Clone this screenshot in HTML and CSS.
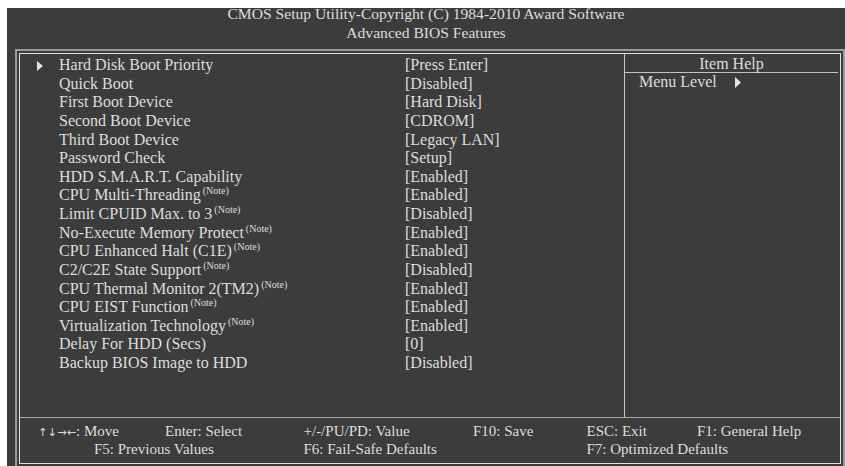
FILE: index.html
```html
<!DOCTYPE html>
<html>
<head>
<meta charset="utf-8">
<link rel="stylesheet" href="styles.css">
</head>
<body>
<div class="screen">
  <header class="title">
    <div>CMOS Setup Utility-Copyright (C) 1984-2010 Award Software</div>
    <div>Advanced BIOS Features</div>
  </header>
  <div class="outer">
    <div class="inner">
      <div class="main">
        <div class="list">
          <div class="row"><span class="mark"><svg width="6" height="10" viewBox="0 0 6 10"><polygon points="0,0 6,5 0,10" fill="#e4e4e4"/></svg></span><span class="label">Hard Disk Boot Priority</span><span class="value">[Press Enter]</span></div>
          <div class="row"><span class="mark"></span><span class="label">Quick Boot</span><span class="value">[Disabled]</span></div>
          <div class="row"><span class="mark"></span><span class="label">First Boot Device</span><span class="value">[Hard Disk]</span></div>
          <div class="row"><span class="mark"></span><span class="label">Second Boot Device</span><span class="value">[CDROM]</span></div>
          <div class="row"><span class="mark"></span><span class="label">Third Boot Device</span><span class="value">[Legacy LAN]</span></div>
          <div class="row"><span class="mark"></span><span class="label">Password Check</span><span class="value">[Setup]</span></div>
          <div class="row"><span class="mark"></span><span class="label">HDD S.M.A.R.T. Capability</span><span class="value">[Enabled]</span></div>
          <div class="row"><span class="mark"></span><span class="label">CPU Multi-Threading<sup class="note">(Note)</sup></span><span class="value">[Enabled]</span></div>
          <div class="row"><span class="mark"></span><span class="label">Limit CPUID Max. to 3<sup class="note">(Note)</sup></span><span class="value">[Disabled]</span></div>
          <div class="row"><span class="mark"></span><span class="label">No-Execute Memory Protect<sup class="note">(Note)</sup></span><span class="value">[Enabled]</span></div>
          <div class="row"><span class="mark"></span><span class="label">CPU Enhanced Halt (C1E)<sup class="note">(Note)</sup></span><span class="value">[Enabled]</span></div>
          <div class="row"><span class="mark"></span><span class="label">C2/C2E State Support<sup class="note">(Note)</sup></span><span class="value">[Disabled]</span></div>
          <div class="row"><span class="mark"></span><span class="label">CPU Thermal Monitor 2(TM2)<sup class="note">(Note)</sup></span><span class="value">[Enabled]</span></div>
          <div class="row"><span class="mark"></span><span class="label">CPU EIST Function<sup class="note">(Note)</sup></span><span class="value">[Enabled]</span></div>
          <div class="row"><span class="mark"></span><span class="label">Virtualization Technology<sup class="note">(Note)</sup></span><span class="value">[Enabled]</span></div>
          <div class="row"><span class="mark"></span><span class="label">Delay For HDD (Secs)</span><span class="value">[0]</span></div>
          <div class="row"><span class="mark"></span><span class="label">Backup BIOS Image to HDD</span><span class="value">[Disabled]</span></div>
        </div>
        <div class="help">
          <div class="help-head">Item Help</div>
          <div class="help-body"><span>Menu Level</span><svg class="lvl" width="6" height="11" viewBox="0 0 6 11"><polygon points="0,0 6,5.5 0,11" fill="#e4e4e4"/></svg></div>
        </div>
      </div>
      <div class="footer">
        <span class="c1"><span class="arrows"><i>↑</i><i>↓</i><i>→</i><i>←</i></span>: Move</span>
        <span class="c2">Enter: Select</span>
        <span class="c3">+/-/PU/PD: Value</span>
        <span class="c4">F10: Save</span>
        <span class="c5">ESC: Exit</span>
        <span class="c6">F1: General Help</span>
        <span class="r2a">F5: Previous Values</span>
        <span class="r2b">F6: Fail-Safe Defaults</span>
        <span class="r2c">F7: Optimized Defaults</span>
      </div>
    </div>
  </div>
</div>
</body>
</html>
```
FILE: styles.css
```css
html, body {
  margin: 0;
  padding: 0;
  background: #ffffff;
}
body {
  font-family: "Liberation Serif", "Times New Roman", serif;
  color: #dedede;
  overflow: hidden;
}
.screen {
  margin: 8px 0 0 7px;
  width: 838px;
  height: 458px;
  background: #3c3c3c;
}
.title {
  height: 41px;
  font-size: 15.6px;
  line-height: 19px;
  text-align: center;
  display: flex;
  flex-direction: column;
}
.title div:first-child {
  line-height: 11px;
  height: 11px;
}
.title div:last-child {
  margin-top: 4px;
  line-height: 19px;
}
.outer {
  margin-left: 8px;
  width: 830px;
  height: 417px;
  border: 2px solid #9c9c9c;
  border-bottom: none;
  padding: 2px 2px 0 2px;
  box-sizing: border-box;
}
.inner {
  border: 1px solid #e2e2e2;
  height: 411px;
  box-sizing: border-box;
  display: flex;
  flex-direction: column;
}
.main {
  display: flex;
  height: 363px;
}
.list {
  width: 604px;
  border-right: 1px solid #c4c4c4;
  padding-top: 2px;
  font-size: 16px;
  line-height: 18.625px;
}
.row {
  display: flex;
  align-items: center;
  height: 18.625px;
}
.mark {
  width: 39px;
  padding-left: 17px;
  box-sizing: border-box;
  display: flex;
  align-items: center;
}
.mark svg {
  display: block;
  margin-top: 1px;
}
.label {
  width: 346px;
  white-space: nowrap;
}
.value {
  white-space: nowrap;
}
.note {
  font-size: 10px;
  line-height: 0;
  vertical-align: 6px;
  margin-left: 2px;
}
.help {
  flex: 1;
  display: flex;
  flex-direction: column;
  font-size: 16px;
}
.help-head {
  height: 19px;
  border-bottom: 1px solid #c4c4c4;
  margin-right: 2px;
  text-align: center;
  line-height: 19px;
  box-sizing: border-box;
}
.help-body {
  display: flex;
  align-items: center;
  height: 18.625px;
  line-height: 18.625px;
  padding-left: 14px;
}
.help-body .lvl {
  margin-left: 18px;
}
.footer {
  border-top: 1px solid #a8a8a8;
  flex: 1;
  padding: 3.5px 0 0 23px;
  font-size: 15px;
  line-height: 18.3px;
  display: grid;
  grid-template-columns: 122px 138.5px 169.5px 113.5px 110.5px 1fr;
  grid-auto-rows: 18.3px;
  white-space: nowrap;
}
.c1 {
  margin-left: -5px;
}
.arrows {
  font-family: "DejaVu Sans", sans-serif;
  font-size: 11px;
}
.arrows i {
  display: inline-block;
  width: 9.5px;
  text-align: center;
  font-style: normal;
}
.r2a {
  grid-column: 1 / span 2;
  padding-left: 51px;
}
.r2b {
  grid-column: 3 / span 2;
}
.r2c {
  grid-column: 5 / span 2;
}
```
